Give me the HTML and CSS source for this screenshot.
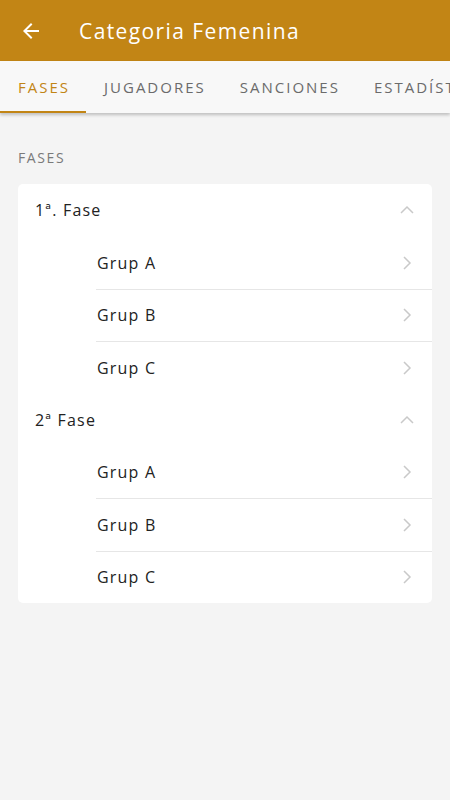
FILE: index.html
```html
<!DOCTYPE html>
<html lang="es">
<head>
<meta charset="utf-8">
<title>Categoria Femenina</title>
<link rel="stylesheet" href="styles.css">
</head>
<body>
<header class="appbar">
  <span class="back">
    <svg width="24" height="24" viewBox="0 0 24 24"><path d="M20 11H7.83l5.59-5.59L12 4l-8 8 8 8 1.41-1.41L7.83 13H20v-2z" fill="#fff"/></svg>
  </span>
  <h1 class="title">Categoria Femenina</h1>
</header>
<nav class="tabs">
  <div class="tab active">FASES</div>
  <div class="tab">JUGADORES</div>
  <div class="tab">SANCIONES</div>
  <div class="tab">ESTADÍSTICAS</div>
</nav>
<main class="content">
  <div class="section-label">FASES</div>
  <div class="card">
    <div class="phase">
      <span class="phase-name">1ª. Fase</span>
      <svg class="chev" width="16" height="16" viewBox="0 0 16 16"><path d="M2 11 L8 5 L14 11" fill="none" stroke="#c9c9c9" stroke-width="1.5"/></svg>
    </div>
    <div class="group"><span>Grup A</span><svg class="chev" width="16" height="16" viewBox="0 0 16 16"><path d="M5 2 L11 8 L5 14" fill="none" stroke="#c9c9c9" stroke-width="1.5"/></svg></div>
    <div class="group"><span>Grup B</span><svg class="chev" width="16" height="16" viewBox="0 0 16 16"><path d="M5 2 L11 8 L5 14" fill="none" stroke="#c9c9c9" stroke-width="1.5"/></svg></div>
    <div class="group"><span>Grup C</span><svg class="chev" width="16" height="16" viewBox="0 0 16 16"><path d="M5 2 L11 8 L5 14" fill="none" stroke="#c9c9c9" stroke-width="1.5"/></svg></div>
    <div class="phase">
      <span class="phase-name">2ª Fase</span>
      <svg class="chev" width="16" height="16" viewBox="0 0 16 16"><path d="M2 11 L8 5 L14 11" fill="none" stroke="#c9c9c9" stroke-width="1.5"/></svg>
    </div>
    <div class="group"><span>Grup A</span><svg class="chev" width="16" height="16" viewBox="0 0 16 16"><path d="M5 2 L11 8 L5 14" fill="none" stroke="#c9c9c9" stroke-width="1.5"/></svg></div>
    <div class="group"><span>Grup B</span><svg class="chev" width="16" height="16" viewBox="0 0 16 16"><path d="M5 2 L11 8 L5 14" fill="none" stroke="#c9c9c9" stroke-width="1.5"/></svg></div>
    <div class="group"><span>Grup C</span><svg class="chev" width="16" height="16" viewBox="0 0 16 16"><path d="M5 2 L11 8 L5 14" fill="none" stroke="#c9c9c9" stroke-width="1.5"/></svg></div>
  </div>
</main>
</body>
</html>
```
FILE: styles.css
```css
* { box-sizing: border-box; }
html, body { margin: 0; padding: 0; }
body {
  width: 450px;
  height: 800px;
  background: #f4f4f4;
  font-family: "Open Sans", sans-serif;
  overflow: hidden;
}
.appbar {
  height: 61px;
  background: #c28515;
  display: flex;
  align-items: center;
  padding-left: 19px;
}
.back { display: flex; width: 24px; height: 24px; }
.title {
  margin: 0 0 0 36px;
  color: #fff;
  font-size: 21px;
  font-weight: 400;
  letter-spacing: 1.4px;
}
.tabs {
  height: 52px;
  background: #f8f8f8;
  display: flex;
  box-shadow: 0 2px 3px rgba(0,0,0,0.22);
  overflow: hidden;
  white-space: nowrap;
  position: relative;
}
.tab {
  padding: 0 16px 0 18px;
  display: flex;
  align-items: center;
  font-size: 15px;
  letter-spacing: 2px;
  color: #6b6b6b;
  flex: none;
  border-bottom: 2px solid transparent;
  padding-top: 2px;
}
.tab.active { color: #c28515; border-bottom-color: #c28515; }
.content { padding: 0 18px; }
.section-label {
  padding-top: 35px;
  height: 71px;
  font-size: 14px;
  color: #7a7a7a;
  letter-spacing: 1.6px;
}
.card {
  background: #fff;
  border-radius: 5px;
  overflow: hidden;
}
.phase, .group {
  height: 52.4px;
  display: flex;
  align-items: center;
  justify-content: space-between;
  padding-right: 17px;
  font-size: 16px;
  letter-spacing: 1.2px;
  color: #222;
}
.phase { padding-left: 17px; }
.group { margin-left: 78px; padding-left: 1px; }
.group + .group { border-top: 1px solid #e6e6e6; }
.chev { flex: none; }
```
